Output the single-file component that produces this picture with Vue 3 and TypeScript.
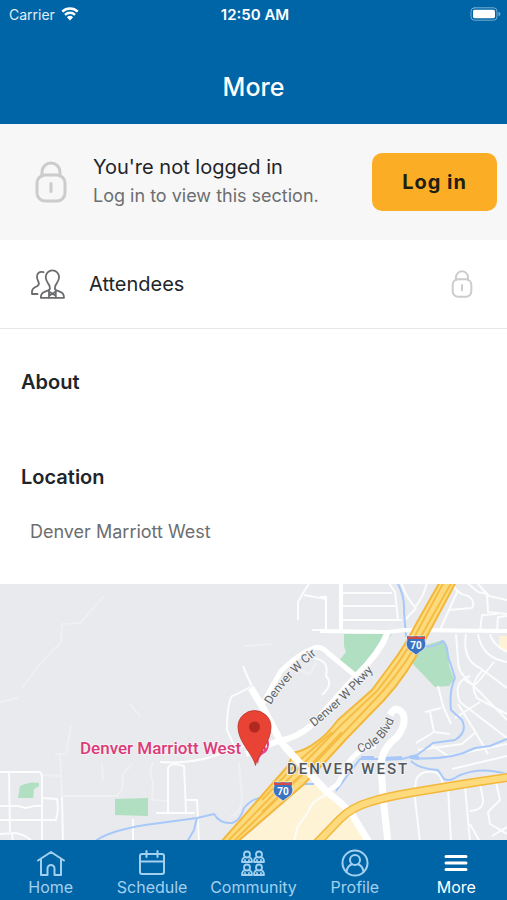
<script setup lang="ts">
import { ref } from 'vue'

type TabId = 'home' | 'schedule' | 'community' | 'profile' | 'more'

interface Tab {
  id: TabId
  label: string
}

const tabs: Tab[] = [
  { id: 'home', label: 'Home' },
  { id: 'schedule', label: 'Schedule' },
  { id: 'community', label: 'Community' },
  { id: 'profile', label: 'Profile' },
  { id: 'more', label: 'More' },
]

const activeTab = ref<TabId>('more')

// Outline of the interstate, which widens to the south-west, and its lane lines.
const interstate =
  'M441 -4 L415 42 Q405 62 392 79 L372 106 L338 136 Q326 152 315 159 Q306 166 293 169 Q291 176 287 183 L258 216 L221 258 L237 258 L303 201 L325 178 L348 153 L384 116 Q408 90 426 54 L457 -4 Z'
const lanes =
  'M445 -4 L418 46 Q405 72 377 107 L342 140 L312 171 L270 214 L227 258 M453 -4 L424 47 Q408 78 382 108 L350 142 L320 174 L280 212 L233 258 M332 148 L300 176 L262 216 M342 148 L306 186 L262 228'
const colfax = 'M314 262 L340 235 Q352 223 370 218 Q385 213 415 208 L470 199 L510 193'

const minorRoads: string[] = [
  // north, above Denver W Pkwy
  'M310 -2 L302 11 L298 18 L298 36', 'M304 11 L326 15 L326 46 L312 46',
  'M341 9 L392 9', 'M341 22 L395 22', 'M341 36 L402 36', 'M388 -2 L395 8 L398 36',
  'M401 -2 Q406 14 416 24 L404 37', 'M416 22 Q424 12 427 -2', 'M458 6 L440 46',
  'M452 -2 Q456 10 468 12 Q476 17 472 24 L448 26', 'M476 -2 L489 12 L507 16', 'M487 10 L488 28 L507 30',
  'M497 46 L498 33 L507 32', 'M480 48 L482 31 L497 30', 'M466 -2 L478 8 L488 10',
  // east side neighbourhood
  'M456 50 L458 76 Q458 88 466 94 L507 136', 'M466 50 Q462 76 480 84 L507 104',
  'M478 50 Q482 74 507 78', 'M490 50 Q492 60 507 68', 'M470 92 Q452 98 460 118 L507 154',
  'M483 86 Q468 100 477 114 L507 130', 'M458 120 L476 149 L488 170', 'M464 95 Q474 104 478 98 L494 78',
  'M476 148 L462 160 L418 166', 'M438 102 L443 122 L451 140', 'M425 128 L441 124',
  'M430 128 L434 148 L416 159', 'M434 148 L450 150', 'M455 134 L480 118',
  'M430 160 L448 172 L507 160', 'M452 185 L490 176 L507 172',
  // south of Colfax
  'M414 206 L420 258', 'M415 207 L416 196 Q420 186 434 188 Q442 190 443 202', 'M448 204 L451 258',
  'M465 202 L470 258', 'M480 200 L483 215 Q484 226 470 227', 'M496 198 L500 216 L488 228 L490 240 L507 250',
  'M470 240 L480 258', 'M492 252 L507 243',
  // around the hotel
  'M313 74 Q330 76 326 92 Q334 100 322 111',
  'M250 103 Q240 109 232 112 Q227 120 227 146 L236 166',
  'M243 82 L256 112', 'M160 178 Q190 180 214 172 L250 160',
  // south-west
  'M168 228 L168 184 Q170 180 176 180 L184 182 L186 229', 'M156 229 L195 229', 'M185 216 L197 216 L199 258',
  'M0 188 L39 188 Q42 189 42 193 L42 258', 'M9 188 L10 248', 'M0 222 L18 222 L26 224 L34 222 L42 222',
  'M0 236 L56 236 Q59 226 57 215 L42 214', 'M62 213 L63 258', 'M0 250 L16 249 Q26 251 33 258', 'M12 250 L13 258',
  'M133 235 L133 256', 'M326 211 Q311 217 308 228 L298 242 L294 256',
]

const faintPaths: string[] = [
  'M104 12 L80 39 L62 40 L61 58 L40 80 L22 104', 'M0 118 L18 114', 'M55 170 L66 170 L71 142',
  'M60 170 L62 212 L118 212', 'M102 180 L103 196', 'M132 180 L123 190 L122 206 L116 212',
  'M153 178 Q148 188 153 198 L152 216 L168 217', 'M130 120 L140 132', 'M244 62 L272 60',
  'M290 82 L310 90 L316 78', 'M42 191 L60 192', 'M239 178 L242 215 Q240 231 230 232',
]
</script>

<template>
  <div class="screen">
    <header class="top">
      <div class="status">
        <div class="carrier">
          <span>Carrier</span>
          <svg class="wifi" viewBox="0 0 18 14" aria-hidden="true">
            <path d="M1.3 4.7a11 11 0 0 1 15.4 0M4 7.8a7.2 7.2 0 0 1 10 0" />
            <path class="wifi-dot" d="M5.9 10.2a4.6 4.6 0 0 1 6.2 0L9 13.5z" />
          </svg>
        </div>
        <span class="time">12:50 AM</span>
        <svg class="battery" viewBox="0 0 31 14" aria-hidden="true">
          <rect class="battery-case" x="1" y=".8" width="26" height="12.4" rx="3.4" />
          <rect class="battery-fill" x="3" y="2.8" width="22" height="8.4" rx="1.6" />
          <path class="battery-cap" d="M28.5 4.8q2 .8 2 2.2t-2 2.2z" />
        </svg>
      </div>
      <h1>More</h1>
    </header>

    <main>
      <section class="login">
        <svg class="lock lock-large" viewBox="0 0 32 42" aria-hidden="true">
          <path d="M7 15V11a9 9 0 0 1 18 0v4" />
          <rect x="2" y="14" width="28" height="26" rx="8" />
          <path d="M16 22.500v8" />
        </svg>
        <div class="login-text">
          <p class="login-title">You're not logged in</p>
          <p class="login-note">Log in to view this section.</p>
        </div>
        <button class="login-button" type="button">Log in</button>
      </section>

      <a class="row" href="#attendees">
        <svg class="people" viewBox="0 0 34 30" aria-hidden="true">
          <path d="M12.500 3.200C8.500 1.800 5.700 4.500 6 8.200c.2 2.200 1 3.500 1.600 4.900.6 1.600.2 2.900-1.200 3.800C3.600 18.600 1 19.200 1 22.400V25h5.500" />
          <path d="M18 21.200c1-1 1.200-2.400.6-4C17.500 14.500 14.700 12 14.700 8a6.700 6.700 0 0 1 13.400 0c0 4-2.800 6.500-3.900 9.200-.6 1.600-.4 3 .6 4l4.500 1.600c2.700 1 3.700 2.700 3.700 6H9.800c0-3.300 1-5 3.700-6z" />
          <path d="M18 21.200v7.300M24.800 21.200v7.300M18 22.500l3.400 2.200 3.400-2.200M18 26.800l3.400-2.100 3.400 2.100" />
        </svg>
        <span class="row-label">Attendees</span>
        <svg class="lock lock-small" viewBox="0 0 32 42" aria-hidden="true">
          <path d="M7 15V11a9 9 0 0 1 18 0v4" />
          <rect x="2" y="14" width="28" height="26" rx="8" />
          <path d="M16 22.500v8" />
        </svg>
      </a>

      <section class="about">
        <h2>About</h2>
      </section>

      <section class="location">
        <h2>Location</h2>
        <p>Denver Marriott West</p>
      </section>

      <svg class="map" viewBox="0 0 507 256" preserveAspectRatio="xMidYMid slice" role="img" aria-label="Map of Denver Marriott West">
        <defs>
          <path id="cir" d="M271 121 Q285 97 317 70" />
          <path id="pkwy" d="M314 143 Q346 118 378 81" />
          <path id="cole" d="M359 169 Q389 159 396 129" />
        </defs>
        <rect width="507" height="256" fill="#e8eaed" />

        <g fill="#b1dfc1">
          <path d="M344 50h48l-36 40-18-12 8-10-2-6z" />
          <path d="M411 78l12-16 20-6 5 8 1 18 5 13-5 7-14 1z" />
          <path d="M20 202q10-5 19-3v3l-5 3-1 9H18z" />
          <path d="M115 215l33-1v18l-33-1z" />
        </g>
        <g fill="#fef3d5">
          <path d="M240 258l63-56 14-2 14 10 42 50z" />
          <path d="M499 52h10v16q-9-1-10-8z" />
        </g>

        <g class="line faint"><path v-for="d in faintPaths" :key="d" :d="d" /></g>
        <g class="line minor"><path v-for="d in minorRoads" :key="d" :d="d" /></g>

        <g class="line water">
          <path d="M397 -2 Q405 12 404 28 L406 52 Q426 70 443 57 Q447 60 448 72 L455 94 Q449 106 451 126 L462 136 Q468 148 455 156 L433 159 Q424 166 417 171 L402 175 L360 175 L350 188 L336 207" />
          <path d="M411 174 Q450 177 475 164 L490 162 L507 155" />
          <path d="M411 177 Q419 185 438 186 L444 195 Q450 198 458 192 Q480 182 507 190" />
          <path d="M361 174h13M383 175l19-1M410 173l9 1" stroke-width="4" />
          <path d="M94 258 Q108 247 145 241 L197 234 L214 230 Q220 240 232 239 Q240 237 244 224 Q252 214 262 214 L300 200 L314 200" />
          <path d="M197 234 L194 246 L187 258" />
        </g>

        <g class="line white">
          <path d="M320 47 L388 48 L405 46 L507 47" stroke-width="4" />
          <path d="M341 -2 L341 48" stroke-width="4" />
          <path d="M320 13h6v33" stroke-width="2" />
          <path d="M262 121 Q273 101 281 87 Q298 70 314 64 Q321 61 329 70 L356 92" stroke-width="5" />
          <path d="M388 48 Q379 70 356 92 L313 140 Q296 155 278 157 Q262 164 246 170" stroke-width="6" />
          <path d="M251 104 L263 124 L281 158 L327 208 Q345 221 353 232 L370 260" stroke-width="7" />
          <path d="M327 208 L338 200 L349 178 Q360 163 376 162" stroke-width="5" />
          <path d="M390 131 Q396 120 403 130 Q407 140 397 153 Q381 165 381 182 L383 212 L388 260" stroke-width="7" />
          <path d="M457 200 L475 196 L507 191" stroke-width="4" />
        </g>

        <g class="line">
          <path :d="colfax" stroke="#f3b73b" stroke-width="9" />
          <path :d="colfax" stroke="#fddb7d" stroke-width="6" />
          <path :d="interstate" fill="#fddb7d" stroke="#f3b73b" stroke-width="2" />
          <path :d="lanes" stroke="#f5bd45" stroke-width="2" />
          <path d="M284 162 L327 208" stroke="#fff" stroke-width="7" />
        </g>

        <g v-for="shield in [{ x: 416, y: 61 }, { x: 283, y: 207 }]" :key="shield.x" :transform="`translate(${shield.x} ${shield.y})`">
          <path d="M-9 -9h18v4Q12 3 4 7L0 10-4 7Q-12 3-9-5z" fill="#3b73c4" stroke="#fff" stroke-width=".6" />
          <path d="M-9-9Q-4-7 0-9 4-7 9-9v3H-9z" fill="#d44b45" />
          <text class="shield-text" x="0" y="4">70</text>
        </g>

        <g class="street">
          <text><textPath href="#cir">Denver W Cir</textPath></text>
          <text><textPath href="#pkwy">Denver W Pkwy</textPath></text>
          <text><textPath href="#cole">Cole Blvd</textPath></text>
        </g>
        <text class="district" x="287" y="190">DENVER WEST</text>
        <text class="hotel" x="80" y="170">Denver Marriott West</text>

        <path d="M258 153q12-1 11 8-1 7-6 9-4 2-5 10l-6-12z" fill="#e84586" />
        <path d="M263 158v8m3-9v6" stroke="#fff" stroke-width="1.500" />
        <path d="M255.500 181C253 170 238 158 238 143a16.500 16.500 0 0 1 33 0c0 15-13 27-15.500 38z" fill="#e94335" stroke="#bb342b" stroke-width=".8" />
        <circle cx="254.500" cy="143" r="5.500" fill="#b0281f" />
      </svg>
    </main>

    <nav class="tabs" aria-label="Main">
      <a v-for="tab in tabs" :key="tab.id" class="tab" :class="{ active: tab.id === activeTab }" :href="`#${tab.id}`" @click.prevent="activeTab = tab.id">
        <svg viewBox="0 0 30 30" aria-hidden="true">
          <path v-if="tab.id === 'home'" d="M2 12.500L15 4l13 8.500M5 10.500V27h6.500v-6.500a3.500 3.500 0 0 1 7 0V27H25V10.500" />
          <path v-else-if="tab.id === 'schedule'" d="M5 6h20a2 2 0 0 1 2 2V24a2 2 0 0 1-2 2H5a2 2 0 0 1-2-2V8a2 2 0 0 1 2-2zM3 13.500h24M9.500 3v6M20.500 3v6" />
          <g v-else-if="tab.id === 'community'" class="thin">
            <g v-for="p in [[9, 3], [21, 3], [9, 16], [21, 16]]" :key="p.join()" :transform="`translate(${p[0]} ${p[1]})`">
              <circle cx="0" cy="3.500" r="3" />
              <path d="M-2 6.200Q-5 7-5 11H5Q5 7 2 6.200M-2 10.500V9M2 10.500V9" />
            </g>
          </g>
          <template v-else-if="tab.id === 'profile'">
            <circle cx="15" cy="15" r="12.500" />
            <circle cx="15" cy="12" r="5" />
            <path d="M6.500 24q.5-6 5.500-7.800M23.500 24q-.5-6-5.500-7.800" />
          </template>
          <path v-else class="bars" d="M5 8.500h20M5 15h20M5 21.500h20" />
        </svg>
        <span>{{ tab.label }}</span>
      </a>
    </nav>
  </div>
</template>

<style>
body {
  margin: 0;
  background: #fff;
}
</style>

<style scoped>
.screen {
  display: flex;
  flex-direction: column;
  min-height: 100vh;
  font-family: Inter, "Liberation Sans", sans-serif;
  color: #212529;
}

h1,
h2,
p {
  margin: 0;
}

a {
  color: inherit;
  text-decoration: none;
}

svg {
  display: block;
  fill: none;
  stroke-linecap: round;
  stroke-linejoin: round;
}

.top {
  background: #0065a6;
  color: #fff;
}

.status {
  display: grid;
  grid-template-columns: 1fr auto 1fr;
  align-items: center;
  height: 28px;
  padding: 0 6px 0 9px;
  font-size: 14px;
}

.carrier {
  display: flex;
  align-items: center;
  gap: 6px;
  color: #e0edf5;
}

.wifi {
  width: 18px;
  height: 14px;
  stroke: #fff;
  stroke-width: 2.4;
  stroke-linecap: butt;
}

.wifi-dot {
  fill: #fff;
  stroke: none;
}

.time {
  font-size: 15px;
  font-weight: 600;
}

.battery {
  justify-self: end;
  width: 31px;
  height: 14px;
}

.battery-case {
  stroke: #78aed2;
}

.battery-fill {
  fill: #fff;
}

.battery-cap {
  fill: #78aed2;
}

h1 {
  padding: 43px 16px 21px;
  font-size: 25px;
  line-height: 32px;
  font-weight: 500;
  text-align: center;
}

main {
  display: flex;
  flex: 1;
  flex-direction: column;
}

.login {
  display: flex;
  align-items: center;
  padding: 29px 10px 29px 35px;
  background: #f7f7f7;
}

.lock {
  flex: none;
  stroke: #ccc;
  stroke-width: 3;
}

.lock-large {
  width: 32px;
  height: 42px;
}

.lock-small {
  width: 22px;
  height: 28px;
}

.login-text {
  flex: 1;
  padding-left: 26px;
}

.login-title {
  font-size: 20px;
  line-height: 28px;
}

.login-note {
  font-size: 18px;
  line-height: 30px;
  color: #6c6e70;
}

.login-button {
  flex: none;
  padding: 14px 30px;
  border: 0;
  border-radius: 10px;
  background: #fbad26;
  color: #1d2014;
  font: inherit;
  font-size: 20px;
  line-height: 30px;
  font-weight: 700;
  letter-spacing: 1px;
}

.row {
  display: flex;
  align-items: center;
  padding: 28px 34px 28px 31px;
  border-bottom: 1px solid #e8e8ea;
}

.people {
  width: 34px;
  height: 30px;
  stroke: #6a6c6e;
  stroke-width: 1.8;
}

.row-label {
  flex: 1;
  padding-left: 24px;
  font-size: 20px;
  line-height: 32px;
}

h2 {
  font-size: 20px;
  line-height: 30px;
  font-weight: 600;
}

.about {
  padding: 38px 21px 27px;
}

.location {
  padding: 38px 21px;
}

.location p {
  padding: 26px 9px 0;
  font-size: 18px;
  line-height: 28px;
  color: #6c6e70;
}

.map {
  flex: 1;
  width: 100%;
  min-height: 256px;
}

.line path {
  stroke-linecap: butt;
}

.faint {
  stroke: #eff0f1;
  stroke-width: 2;
}

.minor {
  stroke: #fbfcfc;
  stroke-width: 2;
}

.white {
  stroke: #fff;
}

.water {
  stroke: #a8c8fa;
  stroke-width: 2;
}

.map text {
  font-family: Roboto, sans-serif;
  paint-order: stroke;
  stroke: #f2f3f5;
  stroke-width: 2;
}

.map .street text {
  font-size: 12px;
  fill: #5d6266;
}

.map .district {
  font-size: 15px;
  font-weight: 500;
  letter-spacing: 2px;
  fill: #53585d;
}

.map .hotel {
  font-size: 17px;
  font-weight: 500;
  fill: #dc3b78;
}

.map .shield-text {
  font-size: 10px;
  font-weight: 700;
  fill: #fff;
  stroke: none;
  text-anchor: middle;
}

.tabs {
  display: grid;
  grid-template-columns: repeat(5, 1fr);
  padding: 8px 0 4px;
  background: #0065a6;
}

.tab {
  display: flex;
  flex-direction: column;
  align-items: center;
  color: #a3d0ef;
  font-size: 16px;
  line-height: 18px;
}

.tab svg {
  width: 30px;
  height: 30px;
  stroke: currentColor;
  stroke-width: 2;
}

.tab .thin {
  stroke-width: 1.8;
}

.tab .bars {
  stroke-width: 3;
}

.tab.active {
  color: #fff;
}
</style>
